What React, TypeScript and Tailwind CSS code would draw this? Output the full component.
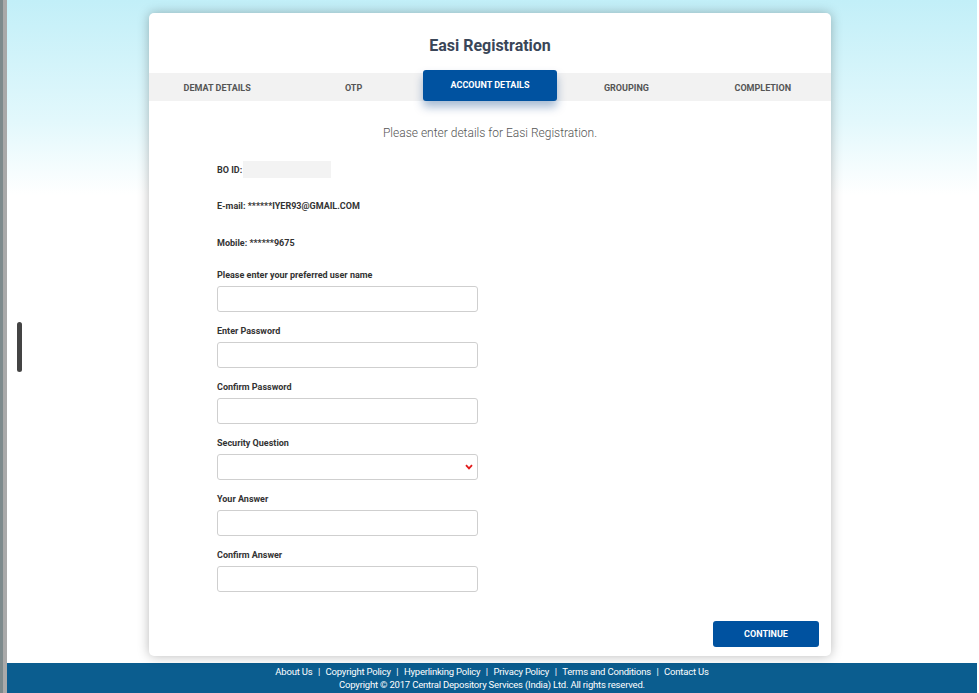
import React from 'react';

const TABS = ['DEMAT DETAILS', 'OTP', 'ACCOUNT DETAILS', 'GROUPING', 'COMPLETION'];

const FIELDS = [
  { label: 'Please enter your preferred user name', type: 'text' },
  { label: 'Enter Password', type: 'password' },
  { label: 'Confirm Password', type: 'password' },
  { label: 'Security Question', type: 'select' },
  { label: 'Your Answer', type: 'text' },
  { label: 'Confirm Answer', type: 'text' },
];

const FOOTER_LINKS = ['About Us', 'Copyright Policy', 'Hyperlinking Policy', 'Privacy Policy', 'Terms and Conditions', 'Contact Us'];

export default function App() {
  return (
    <div className="w-[979px] h-[693px] overflow-hidden flex bg-white font-['Roboto',sans-serif]">
      {/* left window edge */}
      <div className="w-[7px] h-full flex shrink-0">
        <div className="w-[3px] bg-[#7d8a8c]" />
        <div className="w-[4px] bg-[#a9a9a9]" />
      </div>

      <div className="flex-1 flex flex-col">
        <div className="flex-1 flex bg-[linear-gradient(to_bottom,#c2eff8_0px,#e2f8fc_120px,#ffffff_195px)] relative">
          {/* page scrollbar thumb */}
          <div className="absolute left-[10px] top-[322px] w-[5px] h-[50px] rounded-full bg-[#444]" />

          <div className="ml-[142px] mt-[13px] w-[682px] h-[643px] bg-white rounded-[5px] shadow-[0_0_12px_rgba(0,0,0,0.28)] flex flex-col">
            <h1 className="pt-[23px] h-[60px] text-center text-[16px] font-bold text-[#3a4658] leading-[20px]">
              Easi Registration
            </h1>

            {/* steps */}
            <div className="grid grid-cols-5 h-[28px] bg-[#f2f2f2]">
              {TABS.map((tab) =>
                tab === 'ACCOUNT DETAILS' ? (
                  <div
                    key={tab}
                    className="-mt-[3px] h-[31px] mx-[1px] rounded-[3px] bg-[#0052a0] text-white flex items-center justify-center text-[9px] font-bold shadow-[0_6px_10px_rgba(0,60,130,0.35)] pt-[1px]"
                  >
                    {tab}
                  </div>
                ) : (
                  <div key={tab} className="flex items-center justify-center text-[9px] font-bold text-[#555] pt-[3px]">
                    {tab}
                  </div>
                )
              )}
            </div>

            <p className="mt-[25px] text-center text-[12px] font-light text-[#555] leading-[14px]">
              Please enter details for Easi Registration.
            </p>

            <div className="pl-[68px] flex flex-col">
              <div className="mt-[21px] h-[17px] flex items-center text-[9px] font-bold text-[#333]">
                <span className="pt-[3px]">BO ID:</span>
                <span className="ml-[1px] w-[88px] h-[17px] bg-[#f3f3f3]" />
              </div>
              <div className="mt-[23px] h-[12px] flex items-center text-[9px] font-bold text-[#333]">
                E-mail: ******IYER93@GMAIL.COM
              </div>
              <div className="mt-[25px] h-[12px] flex items-center text-[9px] font-bold text-[#333]">
                Mobile: ******9675
              </div>

              <div className="mt-[18px] flex flex-col">
                {FIELDS.map((f) => (
                  <div key={f.label} className="flex flex-col h-[56px]">
                    <label className="h-[14px] pt-[2px] flex items-center text-[9px] font-bold text-[#333]">{f.label}</label>
                    {f.type === 'select' ? (
                      <div className="mt-[4px] w-[261px] h-[26px] border border-[#cfcfcf] rounded-[3px] flex items-center justify-end pr-[4px]">
                        <svg width="8" height="6" viewBox="0 0 8 6">
                          <path d="M1 1.2 L4 4.4 L7 1.2" fill="none" stroke="#e21b1b" strokeWidth="1.8" />
                        </svg>
                      </div>
                    ) : (
                      <input
                        type={f.type}
                        className="mt-[4px] w-[261px] h-[26px] border border-[#cfcfcf] rounded-[3px] outline-none px-2 text-[11px]"
                      />
                    )}
                  </div>
                ))}
              </div>
            </div>

            <div className="flex justify-end pr-[12px] mt-[17px]">
              <button className="w-[106px] h-[26px] rounded-[3px] bg-[#0052a0] text-white text-[9px] font-bold pt-[1px]">
                CONTINUE
              </button>
            </div>
          </div>
        </div>

        <footer className="h-[30px] bg-[#0b5d8f] text-white flex flex-col items-center justify-center text-[9.5px] leading-[13px] tracking-[-0.2px] pb-[1px]">
          <div className="flex gap-[5.5px]">
            {FOOTER_LINKS.map((l, i) => (
              <React.Fragment key={l}>
                {i > 0 && <span>|</span>}
                <span>{l}</span>
              </React.Fragment>
            ))}
          </div>
          <div>Copyright © 2017 Central Depository Services (India) Ltd. All rights reserved.</div>
        </footer>
      </div>
      <div className="w-[2px] h-full bg-white shrink-0" />
    </div>
  );
}
